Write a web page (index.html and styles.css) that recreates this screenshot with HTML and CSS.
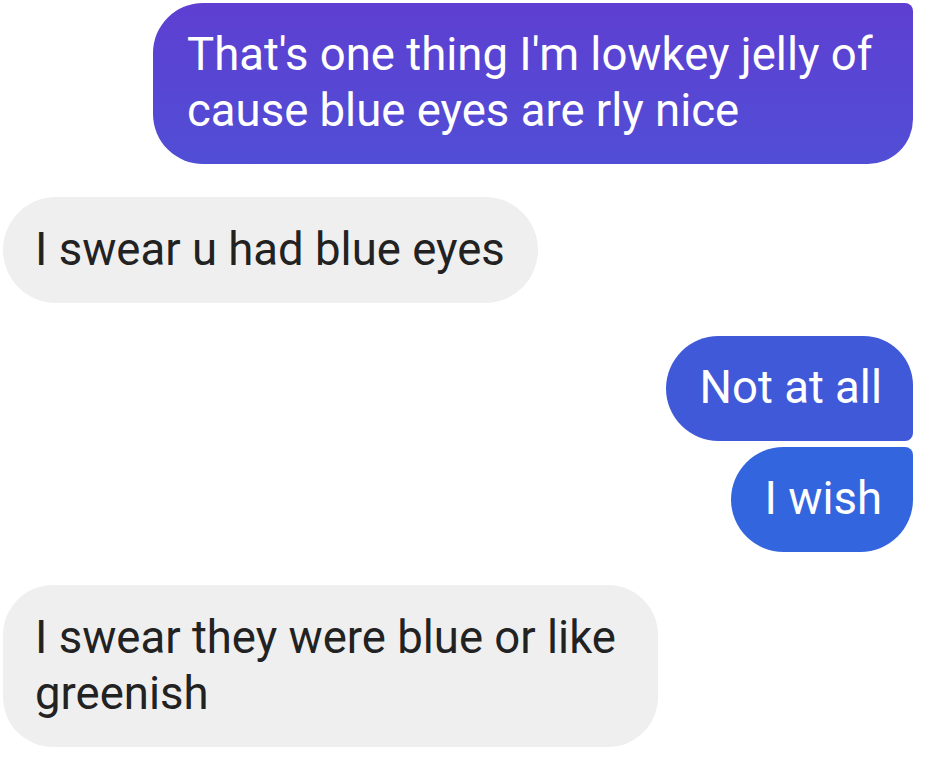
FILE: index.html
```html
<!DOCTYPE html>
<html lang="en">
<head>
  <meta charset="UTF-8" />
  <meta name="viewport" content="width=device-width, initial-scale=1.0" />
  <title>Chat</title>
  <link rel="stylesheet" href="styles.css">
</head>
<body>
  <!-- ===== THREAD ===== -->
  <main class="thread">
    <div class="msg out wide">That's one thing I'm lowkey jelly of cause blue eyes are rly nice</div>

    <div class="msg in">I swear u had blue eyes</div>

    <div class="group">
      <div class="msg out first">Not at all</div>
      <div class="msg out last">I wish</div>
    </div>

    <div class="msg in wide-in">I swear they were blue or like greenish</div>
  </main>
</body>
</html>
```

FILE: styles.css
```css
:root {
  --in-bg: #efefef;
  --in-fg: #222222;
  --out-fg: #ffffff;
}
* { box-sizing: border-box; margin: 0; padding: 0; }

body {
  font-family: Roboto, "Noto Sans", Arial, sans-serif;
  background: #ffffff;
  width: 935px;
  height: 760px;
  overflow: hidden;
}

/* ===== THREAD ===== */
.thread {
  display: flex;
  flex-direction: column;
  gap: 33px;
  padding: 3px 22px 0 3px;
}

.msg {
  font-size: 45.5px;
  line-height: 56px;
  padding: 25px 33px 25px 32px;
  border-radius: 53px;
  width: fit-content;
}

.msg.in {
  align-self: flex-start;
  background: var(--in-bg);
  color: var(--in-fg);
}

.msg.out {
  align-self: flex-end;
  color: var(--out-fg);
}

/* first outgoing bubble */
.msg.wide {
  width: 760px;
  padding-left: 34px;
  padding-top: 24px;
  border-radius: 50px 8px 45px 50px;
  background: linear-gradient(180deg, #5e3fd1 0%, #514ed6 100%);
}

.group {
  align-self: flex-end;
  display: flex;
  flex-direction: column;
  align-items: flex-end;
  gap: 6px;
}
.group .msg { height: 105px; padding: 24px 31px 0 34px; }
.msg.first {
  border-radius: 53px 50px 8px 53px;
  background: #3f59d9;
}
.msg.last {
  border-radius: 53px 8px 53px 53px;
  background: #3366de;
}

.msg.wide-in {
  width: 655px;
  border-radius: 50px;
}
```
